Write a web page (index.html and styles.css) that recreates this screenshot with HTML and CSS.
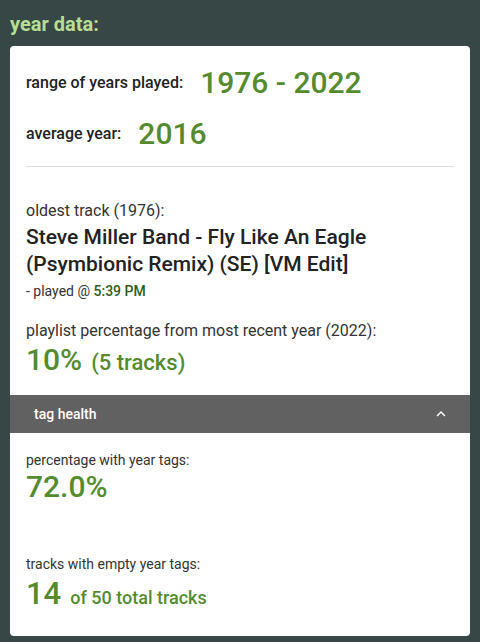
FILE: index.html
```html
<!DOCTYPE html>
<html>
<head>
<meta charset="utf-8">
<link rel="stylesheet" href="styles.css">
</head>
<body>
<h2 class="title">year data:</h2>
<div class="card">
  <div class="section">
    <div class="stat-row">
      <span class="label">range of years played:</span>
      <span class="big">1976 - 2022</span>
    </div>
    <div class="stat-row">
      <span class="label">average year:</span>
      <span class="big">2016</span>
    </div>
    <hr class="divider">
    <div class="oldest">
      <div class="sub">oldest track (1976):</div>
      <div class="track">Steve Miller Band - Fly Like An Eagle (Psymbionic Remix) (SE) [VM Edit]</div>
      <div class="played">- played @ <b>5:39 PM</b></div>
    </div>
    <div class="recent">
      <div class="sub">playlist percentage from most recent year (2022):</div>
      <div class="pct"><span class="num">10%</span><span class="extra">(5 tracks)</span></div>
    </div>
  </div>
  <div class="panel-head">
    <span>tag health</span>
    <svg class="chev" viewBox="0 0 24 24"><path d="M7.41 15.41L12 10.83l4.59 4.58L18 14l-6-6-6 6z" fill="#fff"/></svg>
  </div>
  <div class="panel-body">
    <div class="sm">percentage with year tags:</div>
    <div class="num">72.0%</div>
    <div class="sm gap">tracks with empty year tags:</div>
    <div class="pct"><span class="num n14">14</span><span class="extra small">of 50 total tracks</span></div>
  </div>
</div>
</body>
</html>
```
FILE: styles.css
```css
html, body { margin: 0; padding: 0; }
body {
  background: #364745;
  font-family: Roboto, "Noto Sans", sans-serif;
  color: #212121;
  padding: 0 10px;
  height: 642px;
  overflow: hidden;
}
.title {
  margin: 0;
  padding-top: 12px;
  height: 46px;
  box-sizing: border-box;
  font-size: 20px;
  line-height: 24px;
  font-weight: 700;
  color: #b8dd95;
}
.card {
  background: #fff;
  border-radius: 4px;
  overflow: hidden;
  height: 590px;
}
.section { padding: 11px 16px 17px; }
.stat-row {
  display: flex;
  align-items: center;
  gap: 17px;
  height: 50px;
}
.stat-row + .stat-row { margin-top: 1px; }
.label { font-size: 16px; font-weight: 500; color: #222; }
.big { font-size: 30px; font-weight: 500; color: #558b2f; }
.divider {
  border: 0;
  border-top: 1px solid #ddd;
  margin: 8px 0 0;
}
.oldest { padding-top: 34px; }
.sub { font-size: 16px; line-height: 20px; color: #333; }
.track {
  font-size: 21px;
  font-weight: 500;
  line-height: 27px;
  margin-top: 3px;
  color: #222;
}
.played { font-size: 14px; line-height: 17px; margin-top: 5px; color: #333; }
.played b { color: #2e5d1a; font-weight: 500; }
.recent { padding-top: 21px; }
.pct { display: flex; align-items: baseline; gap: 9px; color: #558b2f; margin-top: 1px; }
.num { font-size: 30px; font-weight: 500; color: #558b2f; line-height: 36px; }
.extra { font-size: 22px; font-weight: 500; }
.extra.small { font-size: 18px; }
.n14 { font-size: 31px; line-height: 40px; }
.panel-head {
  background: #616161;
  height: 38px;
  display: flex;
  align-items: center;
  justify-content: space-between;
  padding: 0 20px 0 24px;
  color: #fff;
  font-size: 14px;
  font-weight: 500;
}
.chev { width: 18px; height: 18px; }
.panel-body { padding: 18px 16px; }
.panel-body .pct { margin-top: 1px; }
.sm { font-size: 14px; line-height: 18px; color: #333; }
.gap { margin-top: 50px; }
```
